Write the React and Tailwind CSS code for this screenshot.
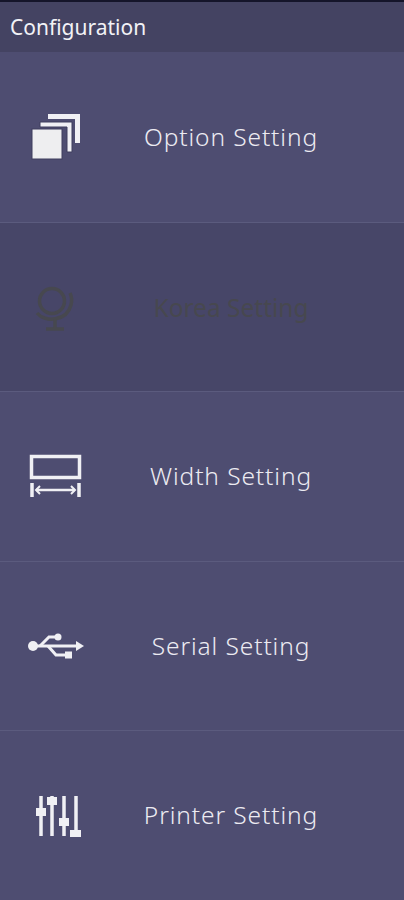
const font = { fontFamily: '"Noto Sans", "Open Sans", sans-serif' };

function StackIcon() {
  return (
    <svg width="60" height="60" viewBox="0 0 60 60" fill="none">
      <path d="M23 7H55V36H50V12H23Z" fill="#f0f0f4" />
      <path d="M15 15H47V45H42V20H15Z" fill="#f0f0f4" stroke="#3f3e5f" strokeWidth="1" />
      <rect x="7" y="22" width="30" height="30" fill="#eeeef0" stroke="#3f3e5f" strokeWidth="1" />
    </svg>
  );
}

function GlobeIcon() {
  return (
    <svg width="60" height="60" viewBox="0 0 60 60" fill="none" stroke="#47484f" strokeWidth="3.5">
      <circle cx="27" cy="24" r="12.5" />
      <path d="M12 36C20 46 42 44 46 28C47 24 47 20 45 16" />
      <path d="M30 42V51M21 52H39" />
    </svg>
  );
}

function WidthIcon() {
  return (
    <svg width="60" height="60" viewBox="0 0 60 60" fill="none" stroke="#f0f0f4">
      <rect x="6.5" y="10.5" width="48" height="21" strokeWidth="3.5" />
      <path d="M7 37V51M54 37V51" strokeWidth="3.5" />
      <path d="M11 44H50" strokeWidth="2.5" />
      <path d="M15 40L11 44L15 48M46 40L50 44L46 48" strokeWidth="2" />
    </svg>
  );
}

function UsbIcon() {
  return (
    <svg width="60" height="60" viewBox="0 0 60 60" fill="none" stroke="#f0f0f4" strokeWidth="3">
      <circle cx="8" cy="30" r="5" fill="#f0f0f4" stroke="none" />
      <path d="M8 30H53" />
      <path d="M15 30L24 21H32" />
      <circle cx="33" cy="21" r="3.5" fill="#f0f0f4" stroke="none" />
      <path d="M23 30L31 39H40" />
      <rect x="40" y="35.5" width="7" height="7" fill="#f0f0f4" stroke="none" />
      <path d="M51 25L59 30L51 35Z" fill="#f0f0f4" stroke="none" />
    </svg>
  );
}

function SlidersIcon() {
  return (
    <svg width="60" height="60" viewBox="0 0 60 60" fill="none" stroke="#f0f0f4" strokeWidth="3.5">
      <path d="M16 10V50M27 10V50M39 10V50M51 10V50" />
      <rect x="11" y="22" width="10" height="8" fill="#f0f0f4" stroke="none" />
      <rect x="22" y="11" width="10" height="8" fill="#f0f0f4" stroke="none" />
      <rect x="34" y="32" width="10" height="8" fill="#f0f0f4" stroke="none" />
      <rect x="45" y="44" width="11" height="7" fill="#f0f0f4" stroke="none" />
    </svg>
  );
}

function Row({ icon, label, disabled, first }) {
  return (
    <div className={`flex flex-1 items-center border-t ${first ? 'border-[#4e4d71]' : 'border-[#5b5b7e]'} ${disabled ? 'bg-[#474668]' : 'bg-[#4e4d71]'}`}>
      <div className="flex w-[110px] shrink-0 justify-center">{icon}</div>
      <div className={`flex-1 pr-[52px] text-center text-[24.5px] leading-none ${disabled ? 'pt-[3px] font-normal tracking-normal text-[#47484f]' : 'font-[350] tracking-[0.9px] text-[#ecebf2]'}`}>
        {label}
      </div>
    </div>
  );
}

export default function App() {
  return (
    <div className="flex h-[900px] w-[404px] flex-col overflow-hidden bg-[#4e4d71]" style={font}>
      <div className="h-[2px] shrink-0 bg-[#15152a]" />
      <div className="flex h-[50px] shrink-0 items-center bg-[#444362] pl-[10px] pt-[2px] text-[21px] text-[#f2f2f6]">
        Configuration
      </div>
      <Row icon={<StackIcon />} label="Option Setting" first />
      <Row icon={<GlobeIcon />} label="Korea Setting" disabled />
      <Row icon={<WidthIcon />} label="Width Setting" />
      <Row icon={<UsbIcon />} label="Serial Setting" />
      <Row icon={<SlidersIcon />} label="Printer Setting" />
    </div>
  );
}
